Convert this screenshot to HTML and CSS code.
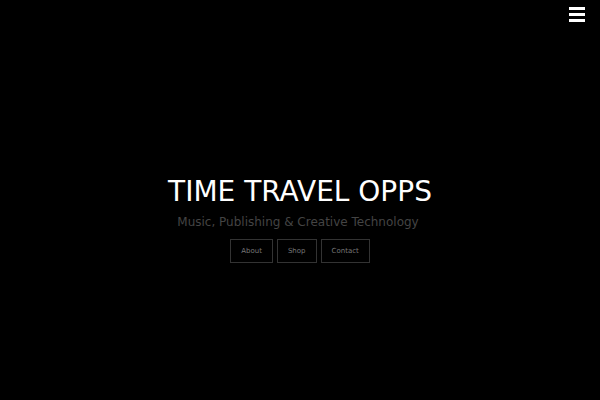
FILE: index.html
```html
<!DOCTYPE html>
<html>
<head>
<meta charset="utf-8">
<link rel="stylesheet" href="styles.css">
</head>
<body>
<header class="topbar">
  <button class="menu-toggle" aria-label="Menu">
    <span class="bar"></span><span class="bar"></span><span class="bar"></span>
  </button>
</header>
<main class="hero">
  <h1 class="title">TIME TRAVEL OPPS</h1>
  <p class="tagline">Music, Publishing &amp; Creative Technology</p>
  <nav class="links">
    <a class="btn" href="#">About</a>
    <a class="btn" href="#">Shop</a>
    <a class="btn" href="#">Contact</a>
  </nav>
</main>
</body>
</html>
```
FILE: styles.css
```css
html, body {
  margin: 0;
  padding: 0;
  background: #000;
  height: 100%;
}
body {
  font-family: "DejaVu Sans", sans-serif;
  color: #fff;
  display: flex;
  flex-direction: column;
}
.topbar {
  display: flex;
  justify-content: flex-end;
  padding: 7px 15px 0 0;
  height: 33px;
  box-sizing: border-box;
}
.menu-toggle {
  background: none;
  border: 0;
  padding: 0;
  width: 16px;
  display: flex;
  flex-direction: column;
  gap: 3px;
  cursor: pointer;
}
.bar {
  display: block;
  width: 16px;
  height: 3px;
  background: #fff;
}
.hero {
  flex: 1;
  display: flex;
  flex-direction: column;
  align-items: center;
  padding-top: 142px;
}
.title {
  margin: 0;
  font-weight: normal;
  font-size: 28px;
  line-height: 34px;
  color: #fff;
}
.tagline {
  margin: 6px 0 0;
  padding-right: 4px;
  font-size: 12px;
  line-height: 15px;
  color: #444;
}
.links {
  display: flex;
  gap: 4px;
  margin-top: 9px;
}
.btn {
  display: block;
  border: 1px solid #333;
  padding: 0 10px;
  height: 22px;
  line-height: 22px;
  font-size: 7px;
  color: #777;
  text-decoration: none;
}
```
